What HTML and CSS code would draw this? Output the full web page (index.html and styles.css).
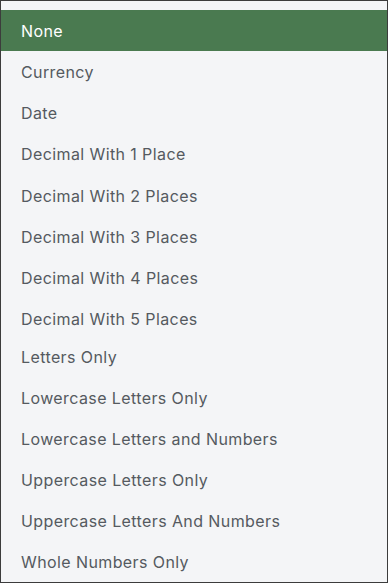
FILE: index.html
```html
<!DOCTYPE html>
<html lang="en">
<head>
    <meta charset="UTF-8">
    <meta name="viewport" content="width=device-width, initial-scale=1.0">
    <title>Format</title>
    <link rel="stylesheet" href="styles.css">
</head>
<body>
    <ul class="dropdown">
        <li class="option selected">None</li>
        <li class="option">Currency</li>
        <li class="option">Date</li>
        <li class="option">Decimal With 1 Place</li>
        <li class="option">Decimal With 2 Places</li>
        <li class="option">Decimal With 3 Places</li>
        <li class="option">Decimal With 4 Places</li>
        <li class="option last-decimal">Decimal With 5 Places</li>
        <li class="option">Letters Only</li>
        <li class="option">Lowercase Letters Only</li>
        <li class="option">Lowercase Letters and Numbers</li>
        <li class="option">Uppercase Letters Only</li>
        <li class="option">Uppercase Letters And Numbers</li>
        <li class="option">Whole Numbers Only</li>
    </ul>
</body>
</html>
```

FILE: styles.css
```css
html, body {
    margin: 0;
    padding: 0;
}
body {
    font-family: Inter, "Noto Sans", sans-serif;
    background-color: #f4f5f7;
}
.dropdown {
    list-style: none;
    margin: 0;
    padding: 9px 0 0;
    height: 583px;
    box-sizing: border-box;
    border: 1px solid #3c3c3c;
    background-color: #f4f5f7;
    overflow: hidden;
}
.option {
    height: 39.2px;
    line-height: 39px;
    padding: 2px 0 0 20px;
    font-size: 16px;
    letter-spacing: 0.4px;
    color: #555a60;
    cursor: pointer;
}
.option.selected {
    height: 39px;
    background-color: #4a7a50;
    color: #fff;
}
.option.last-decimal {
    height: 35.4px;
}
```
